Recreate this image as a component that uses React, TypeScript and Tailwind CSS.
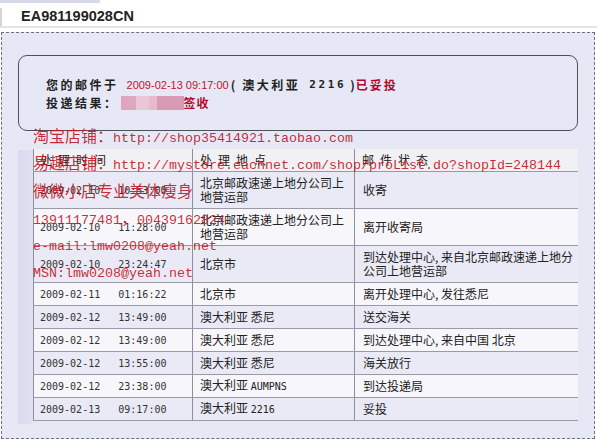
import React from 'react';

const cn = "font-['Noto_Sans_CJK_SC',sans-serif]";
const mono = "font-['DejaVu_Sans_Mono',monospace]";
const wmMono = "font-['Liberation_Mono',monospace]";

type Row = {
  date: string;
  time: string;
  loc: React.ReactNode;
  status: React.ReactNode;
  tall?: boolean;
  dark: boolean;
};

const rows: Row[] = [
  { date: '2009-02-10', time: '10:53:00', loc: <>北京邮政速递上地分公司上<br />地营运部</>, status: '收寄', tall: true, dark: true },
  { date: '2009-02-10', time: '11:28:00', loc: <>北京邮政速递上地分公司上<br />地营运部</>, status: '离开收寄局', tall: true, dark: false },
  { date: '2009-02-10', time: '23:24:47', loc: '北京市', status: <>到达处理中心, 来自北京邮政速递上地分<br />公司上地营运部</>, tall: true, dark: true },
  { date: '2009-02-11', time: '01:16:22', loc: '北京市', status: '离开处理中心, 发往悉尼', dark: false },
  { date: '2009-02-12', time: '13:49:00', loc: '澳大利亚 悉尼', status: '送交海关', dark: true },
  { date: '2009-02-12', time: '13:49:00', loc: '澳大利亚 悉尼', status: '到达处理中心, 来自中国 北京', dark: false },
  { date: '2009-02-12', time: '13:55:00', loc: '澳大利亚 悉尼', status: '海关放行', dark: true },
  { date: '2009-02-12', time: '23:38:00', loc: <>澳大利亚 <span className={`${mono} text-[10px]`}>AUMPNS</span></>, status: '到达投递局', dark: false },
  { date: '2009-02-13', time: '09:17:00', loc: <>澳大利亚 <span className={`${mono} text-[10px]`}>2216</span></>, status: '妥投', dark: true },
];

const TrackRow = ({ row }: { row: Row }) => (
  <div
    className={`grid grid-cols-[160px_162px_223px] border-b border-[#9a9aa6] text-[12px] text-[#222] ${
      row.tall ? 'h-[37px]' : 'h-[23px]'
    } ${row.dark ? 'bg-[#e9eaf5]' : 'bg-[#f7f7fb]'}`}
  >
    <div className={`flex items-center border-l border-r border-[#8e8e9a] pl-[6px] ${mono} text-[10px] text-[#333] whitespace-pre`}>
      {row.date}   {row.time}
    </div>
    <div className={`flex items-center border-r border-[#8e8e9a] pl-[7px] ${cn} leading-[14px]`}>
      <div>{row.loc}</div>
    </div>
    <div className={`flex items-center pl-[8px] ${cn} leading-[14px]`}>
      <div>{row.status}</div>
    </div>
  </div>
);

export default function App() {
  return (
    <div className="relative w-[597px] h-[441px] overflow-hidden bg-white">
      {/* top strip */}
      <div className="relative h-[28px] border-b-2 border-[#e4e4e6]">
        <div className="absolute left-0 top-0 h-[3px] w-[100px] bg-[#d6d9ec]" />
        <div className="absolute left-0 top-[8px] h-[18px] w-[2px] bg-[#d4d4d8]" />
        <div className="pl-[21px] pt-[7px] font-['Liberation_Sans',sans-serif] text-[14.5px] font-bold leading-[18px] text-[#222]">
          EA981199028CN
        </div>
      </div>

      {/* dashed panel */}
      <div className="ml-[1px] mt-[4px] h-[407px] w-[594px] border border-dashed border-[#6f6f78] bg-[#e7e8f6]">
        {/* summary box */}
        <div className="ml-[16px] mt-[22px] h-[76px] w-[560px] rounded-[9px] border border-[#50505a] pl-[27px] pt-[20px]">
          <div className={`flex items-center h-[18px] ${cn} text-[12px] font-bold text-[#222]`}>
            <span className="tracking-[2.5px]">您的邮件于</span>
            <span className="ml-[8px] font-['Liberation_Sans',sans-serif] text-[11px] font-normal text-[#c3102d]">
              2009-02-13 09:17:00
            </span>
            <span className="ml-[2px]">(</span>
            <span className="ml-[7px] tracking-[2.5px]">澳大利亚</span>
            <span className={`ml-[9px] ${mono} text-[11px] tracking-[2.6px]`}>2216</span>
            <span className="ml-[4px]">)</span>
            <span className="ml-[1px] tracking-[2px] text-[#b3072a]">已妥投</span>
          </div>
          <div className={`flex items-center h-[18px] ${cn} text-[12px] font-bold text-[#222]`}>
            <span className="tracking-[2.5px]">投递结果：</span>
            <span className="ml-[2px] flex h-[14px]">
              <span className="w-[15px] bg-[#dfa6bf]" />
              <span className="w-[13px] bg-[#ebc6d6]" />
              <span className="w-[8px] bg-[#e6bccd]" />
              <span className="w-[27px] bg-[#d99ab3]" />
            </span>
            <span className="tracking-[1px] text-[#b3072a]">签收</span>
          </div>
        </div>

        {/* tracking table */}
        <div className="mt-[18px] ml-[16px] flex">
          <div className="w-[15px] bg-gradient-to-r from-[#d9dcee] to-[#dfe1f2] mt-[1px] mb-[-3px]" />
          <div className="w-[545px]">
            <div className={`grid grid-cols-[160px_162px_223px] h-[23px] border-b border-[#9a9aa6] bg-[#f1f0f3] ${cn} text-[12px] text-[#222]`}>
              <div className="flex items-center border-l border-r border-[#8e8e9a] pl-[6px] tracking-[6px]">处理时间</div>
              <div className="flex items-center border-r border-[#8e8e9a] pl-[7px] tracking-[6px]">处理地点</div>
              <div className="flex items-center pl-[7px] tracking-[6px]">邮件状态</div>
            </div>
            {rows.map((r, i) => (
              <TrackRow key={i} row={r} />
            ))}
          </div>
        </div>
      </div>

      {/* shop watermark */}
      <div className="pointer-events-none absolute left-[33px] top-[122px] whitespace-pre text-[#c2121c]/90">
        <div className="h-[27.3px] leading-[27.3px]">
          <span className={`${cn} text-[16px]`}>淘宝店铺：</span>
          <span className={`${wmMono} text-[13.33px]`}>http://shop35414921.taobao.com</span>
        </div>
        <div className="h-[27.3px] leading-[27.3px]">
          <span className={`${cn} text-[16px]`}>易趣店铺：</span>
          <span className={`${wmMono} text-[13.33px]`}>http://mystore.eachnet.com/shop/proList.do?shopId=248144</span>
        </div>
        <div className="h-[27.3px] leading-[27.3px]">
          <span className={`${cn} text-[16px]`}>微微小店专业美体瘦身</span>
        </div>
        <div className="h-[27.3px] leading-[27.3px]">
          <span className={`${wmMono} text-[13.33px]`}>13911177481</span>
          <span className={`${cn} text-[16px]`}>，</span>
          <span className={`${wmMono} text-[13.33px]`}>00439162824</span>
        </div>
        <div className="h-[27.3px] leading-[27.3px]">
          <span className={`${wmMono} text-[13.33px]`}>e-mail:lmw0208@yeah.net</span>
        </div>
        <div className="h-[27.3px] leading-[27.3px]">
          <span className={`${wmMono} text-[13.33px]`}>MSN:lmw0208@yeah.net</span>
        </div>
      </div>
    </div>
  );
}
